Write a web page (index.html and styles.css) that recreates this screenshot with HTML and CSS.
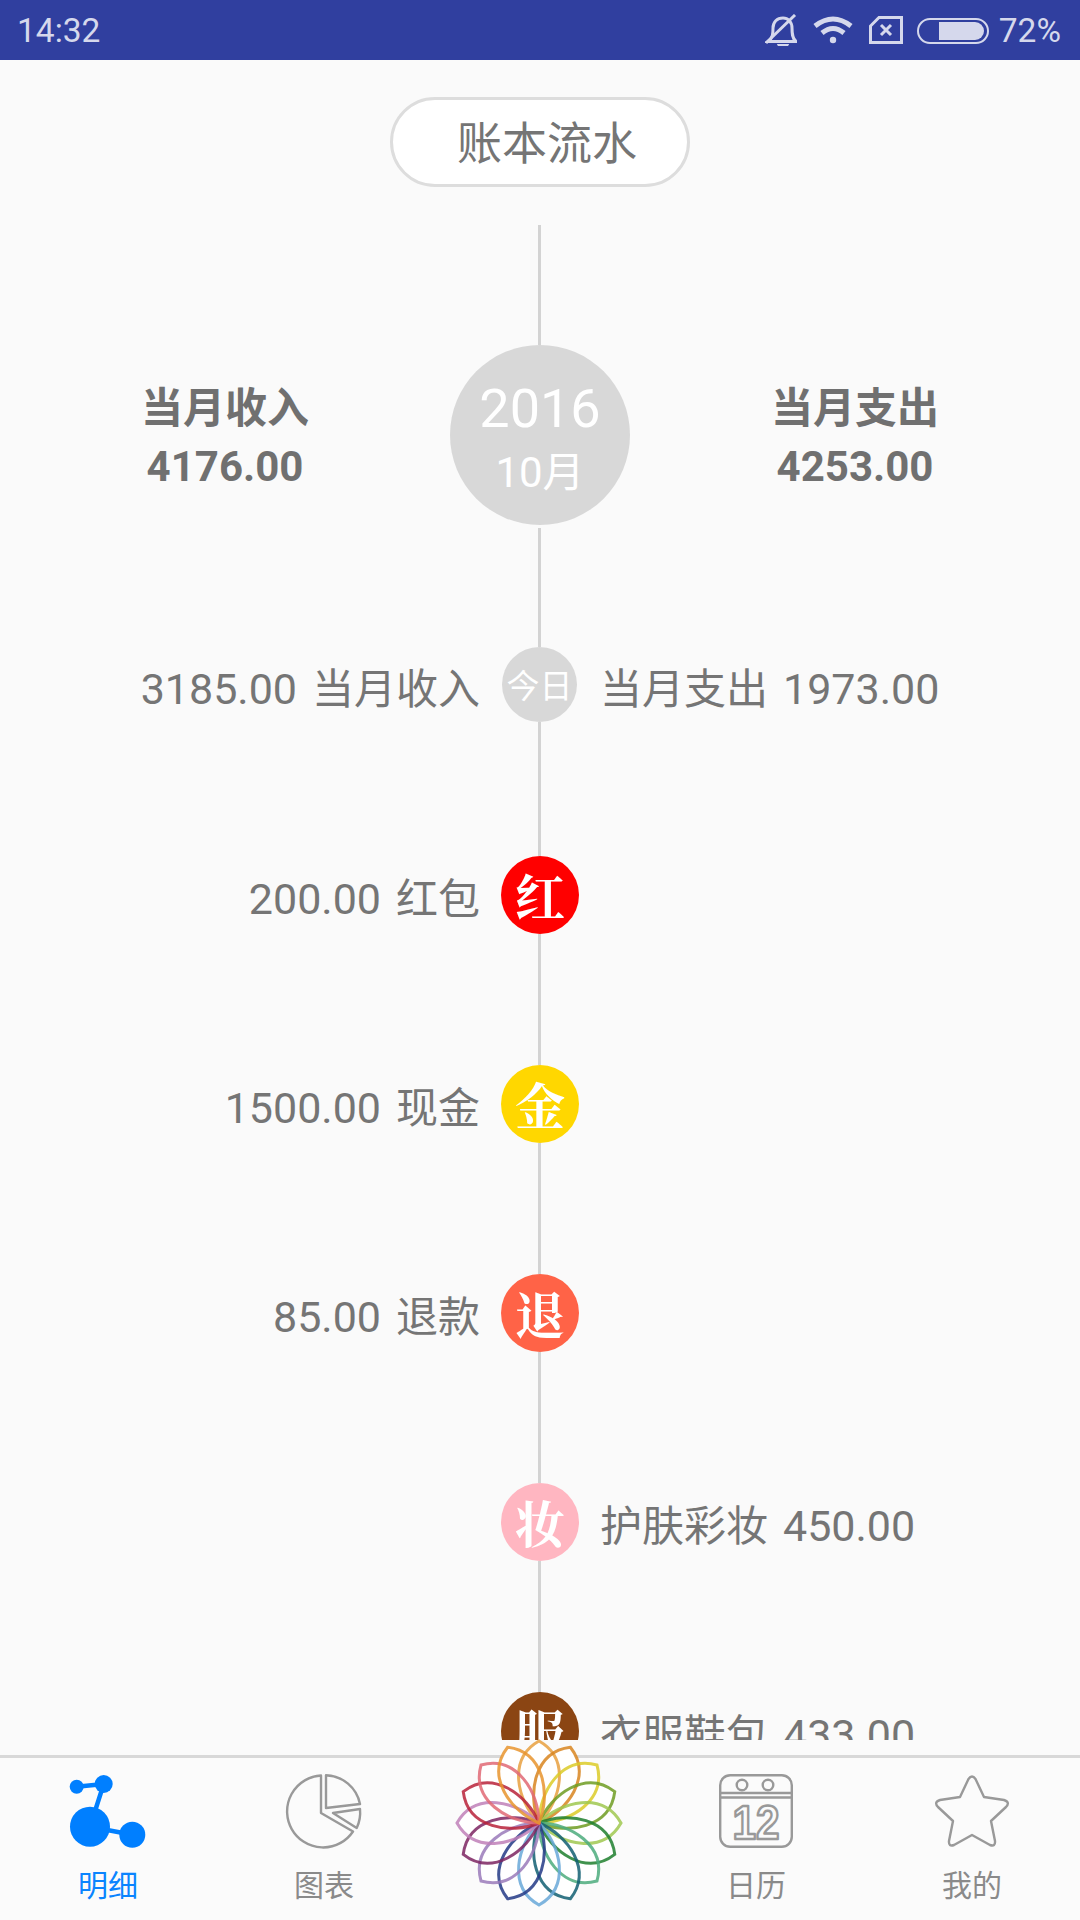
FILE: index.html
```html
<!DOCTYPE html>
<html lang="zh">
<head>
<meta charset="utf-8">
<title>账本流水</title>
<link rel="stylesheet" href="styles.css">
</head>
<body>
<div class="phone">
  <header class="status">
    <span class="clock">14:32</span>
    <div class="status-right">
      <svg class="ic-bell" viewBox="0 0 32 32"><path class="s-line" d="M3 27.500H31C27 24 27 19 27 14C27 8 23 4 18 4C12 4 8 8 8 14C8 19 8 24 3 27.500Z"/><path class="s-fill" d="M12 30H24A6 3.500 0 0 1 12 30Z"/><path class="s-line" d="M1 29L30 1"/></svg>
      <svg class="ic-wifi" viewBox="0 0 40 28"><path class="s-wide" d="M2 10Q20 -4 38 10"/><path class="s-wide" d="M9 17Q20 8 31 17"/><circle class="s-fill" cx="20" cy="24" r="3.200"/></svg>
      <svg class="ic-sim" viewBox="0 0 34 28"><path class="s-line s-thick" d="M10 1.500H32.500V26.500H1.500V10Z"/><path class="s-line s-thick" d="M12 9L22 19M22 9L12 19"/></svg>
      <svg class="ic-batt" viewBox="0 0 72 26"><rect class="s-line s-thin" x="1" y="1" width="70" height="24" rx="12"/><path class="s-fill" d="M22 4H58A9 9 0 0 1 58 22H22Z"/></svg>
      <span class="pct">72%</span>
    </div>
  </header>

  <main class="ledger">
    <div class="pill">账本流水</div>
    <div class="stem stem-top"></div>
    <section class="row row-month">
      <div class="stat"><div class="stat-label">当月收入</div><div class="stat-value">4176.00</div></div>
      <div class="month-dot"><span class="year">2016</span><span class="month">10月</span></div>
      <div class="stat"><div class="stat-label">当月支出</div><div class="stat-value">4253.00</div></div>
    </section>
    <div class="stem stem-after-month"></div>
    <section class="row">
      <div class="side side-left"><span class="amt">3185.00</span><span>当月收入</span></div>
      <div class="dot dot-today">今日</div>
      <div class="side"><span>当月支出</span><span class="amt">1973.00</span></div>
    </section>
    <div class="stem stem-after-today"></div>
    <section class="row">
      <div class="side side-left"><span class="amt">200.00</span><span>红包</span></div>
      <div class="dot dot-cat dot-red">红</div>
      <div class="side"></div>
    </section>
    <div class="stem"></div>
    <section class="row">
      <div class="side side-left"><span class="amt">1500.00</span><span>现金</span></div>
      <div class="dot dot-cat dot-gold">金</div>
      <div class="side"></div>
    </section>
    <div class="stem"></div>
    <section class="row">
      <div class="side side-left"><span class="amt">85.00</span><span>退款</span></div>
      <div class="dot dot-cat dot-tomato">退</div>
      <div class="side"></div>
    </section>
    <div class="stem"></div>
    <section class="row">
      <div class="side side-left"></div>
      <div class="dot dot-cat dot-pink">妆</div>
      <div class="side"><span>护肤彩妆</span><span class="amt">450.00</span></div>
    </section>
    <div class="stem"></div>
    <section class="row">
      <div class="side side-left"></div>
      <div class="dot dot-cat dot-brown">服</div>
      <div class="side"><span>衣服鞋包</span><span class="amt">433.00</span></div>
    </section>
  </main>

  <nav class="tabbar">
    <div class="tab tab-active">
      <svg class="tab-icon" viewBox="0 0 74 74"><path class="net-line" d="M5.700 12.700L32.700 10M32.700 10L19 52.700L61.300 60.700"/><circle class="net-node" cx="5.700" cy="12.700" r="7"/><circle class="net-node" cx="32.700" cy="10" r="9"/><circle class="net-node" cx="19" cy="52.700" r="20"/><circle class="net-node" cx="61.300" cy="60.700" r="13"/></svg>
      <span class="tab-label">明细</span>
    </div>
    <div class="tab">
      <svg class="tab-icon" viewBox="0 0 74 74"><path class="outline" d="M34 1.500A36 36 0 1 0 66 57.500L34 39Z"/><path class="outline" d="M39 1.200A36 36 0 0 1 73 30L39 34Z"/><path class="outline" d="M46 39L73 35A36 36 0 0 1 69.700 54Z"/></svg>
      <span class="tab-label">图表</span>
    </div>
    <div class="tab"></div>
    <div class="tab">
      <svg class="tab-icon" viewBox="0 0 74 74"><rect class="outline" x="1.200" y="1.200" width="71.600" height="71.600" rx="10"/><path class="outline" d="M1 19H73M1 23.500H73"/><circle class="outline" cx="23" cy="11" r="5.300"/><circle class="outline" cx="49" cy="11" r="5.300"/><text class="cal-num" x="37" y="65" text-anchor="middle" textLength="47" lengthAdjust="spacingAndGlyphs">12</text></svg>
      <span class="tab-label">日历</span>
    </div>
    <div class="tab">
      <svg class="tab-icon" viewBox="0 0 74 74"><path class="outline" d="M33.500 5Q37 0 40.500 5L49 23L69 26Q75.500 28 71 33L56 47L60 67Q60.500 73 55 71L37 61L19 71Q13.500 73 14 67L18 47L3 33Q-1.500 28 5 26L25 23Z"/></svg>
      <span class="tab-label">我的</span>
    </div>
    <svg class="flower" viewBox="-85 -85 170 170">
      <defs><path id="petal" d="M0 0C-22 -22 -32 -64 0 -82C32 -64 22 -22 0 0Z"/></defs>
      <g class="flower-base">
        <use href="#petal"/><use href="#petal" transform="rotate(22.500)"/><use href="#petal" transform="rotate(45)"/><use href="#petal" transform="rotate(67.500)"/><use href="#petal" transform="rotate(90)"/><use href="#petal" transform="rotate(112.500)"/><use href="#petal" transform="rotate(135)"/><use href="#petal" transform="rotate(157.500)"/><use href="#petal" transform="rotate(180)"/><use href="#petal" transform="rotate(202.500)"/><use href="#petal" transform="rotate(225)"/><use href="#petal" transform="rotate(247.500)"/><use href="#petal" transform="rotate(270)"/><use href="#petal" transform="rotate(292.500)"/><use href="#petal" transform="rotate(315)"/><use href="#petal" transform="rotate(337.500)"/>
      </g>
      <g class="flower-lines">
        <use href="#petal" stroke="#e8a040"/><use href="#petal" transform="rotate(22.500)" stroke="#d88520"/><use href="#petal" transform="rotate(45)" stroke="#dccb28"/><use href="#petal" transform="rotate(67.500)" stroke="#6f9c22"/><use href="#petal" transform="rotate(90)" stroke="#a0c850"/><use href="#petal" transform="rotate(112.500)" stroke="#1f7f2e"/><use href="#petal" transform="rotate(135)" stroke="#4cab7c"/><use href="#petal" transform="rotate(157.500)" stroke="#125f72"/><use href="#petal" transform="rotate(180)" stroke="#68a8d8"/><use href="#petal" transform="rotate(202.500)" stroke="#233a86"/><use href="#petal" transform="rotate(225)" stroke="#9a7aba"/><use href="#petal" transform="rotate(247.500)" stroke="#7c2462"/><use href="#petal" transform="rotate(270)" stroke="#c080b8"/><use href="#petal" transform="rotate(292.500)" stroke="#b8223a"/><use href="#petal" transform="rotate(315)" stroke="#e06874"/><use href="#petal" transform="rotate(337.500)" stroke="#e8942e"/>
      </g>
    </svg>
  </nav>
</div>
</body>
</html>
```
FILE: styles.css
```css
* { box-sizing: border-box; }
html, body { margin: 0; padding: 0; }
body {
  background: #fafafa;
  font-family: Roboto, "Noto Sans CJK SC", sans-serif;
  color: #757575;
}
.phone {
  width: 1080px;
  height: 1920px;
  display: flex;
  flex-direction: column;
  overflow: hidden;
}

/* status bar */
.status {
  height: 60px;
  flex: none;
  background: #303f9f;
  color: #d5d8ec;
  display: flex;
  align-items: center;
  justify-content: space-between;
  padding: 1px 19px 0 17px;
  font-size: 33.500px;
}
.status-right { display: flex; align-items: center; }
.ic-bell { width: 32px; height: 32px; margin-top: -2px; }
.ic-wifi { width: 40px; height: 28px; margin-left: 16px; margin-top: -2px; }
.ic-sim { width: 34px; height: 28px; margin-left: 16px; margin-top: -2px; }
.ic-batt { width: 72px; height: 26px; margin-left: 14px; }
.pct { margin-left: 10px; }
.s-line { fill: none; stroke: #d5d8ec; stroke-width: 3; }
.s-thick { stroke-width: 3; }
.s-thin { stroke-width: 2; }
.s-wide { fill: none; stroke: #d5d8ec; stroke-width: 5; }
.s-fill { fill: #d5d8ec; }

/* main timeline */
.ledger {
  height: 1680px;
  flex: none;
  overflow: hidden;
  display: flex;
  flex-direction: column;
  align-items: center;
}
.pill {
  flex: none;
  width: 300px;
  height: 90px;
  margin-top: 37px;
  border: 3px solid #dddddd;
  border-radius: 45px;
  background: #fff;
  display: flex;
  align-items: center;
  justify-content: center;
  padding: 0 0 3px 14px;
  font-size: 45px;
}
.stem {
  flex: none;
  width: 3px;
  height: 131px;
  margin-right: 1px;
  background: #d3d3d3;
}
.stem-top { height: 120px; margin-top: 38px; }
.stem-after-month { height: 119px; margin-top: 3px; }
.stem-after-today { height: 134px; }

.row {
  flex: none;
  width: 100%;
  display: grid;
  grid-template-columns: 1fr 78px 1fr;
  column-gap: 21px;
  align-items: center;
  justify-items: center;
  font-size: 42px;
}
.row-month {
  grid-template-columns: 1fr 180px 1fr;
  column-gap: 0;
}
.side {
  width: 100%;
  padding-top: 1px;
  display: flex;
  align-items: baseline;
  gap: 15px;
  white-space: nowrap;
}
.side-left { justify-content: flex-end; }
.amt { font-size: 43px; }

.stat { text-align: center; font-weight: 700; color: #707070; line-height: 58px; padding-top: 5px; }
.month-dot {
  width: 180px;
  height: 180px;
  border-radius: 50%;
  background: #d8d8d8;
  color: #fff;
  display: flex;
  flex-direction: column;
  align-items: center;
  padding-top: 30px;
}
.year { font-size: 54px; line-height: 68px; }
.month { font-size: 42px; line-height: 60px; }

.dot {
  border-radius: 50%;
  color: #fff;
  display: flex;
  align-items: center;
  justify-content: center;
}
.dot-today { width: 75px; height: 75px; margin-right: 1px; padding-bottom: 2px; background: #d8d8d8; font-size: 33px; }
.dot-cat {
  width: 78px;
  height: 78px;
  padding-bottom: 3px;
  font-family: "Noto Serif CJK SC", "Liberation Serif", "Noto Sans CJK SC", serif;
  font-weight: 700;
  font-size: 50px;
}
.dot-red { background: #ff0000; }
.dot-gold { background: #ffd700; }
.dot-tomato { background: #ff6347; }
.dot-pink { background: #ffb6c1; }
.dot-brown { background: #8b4513; }

/* tab bar */
.tabbar {
  position: relative;
  flex: none;
  height: 165px;
  margin-top: 15px;
  border-top: 3px solid #d8d8d8;
  background: #fbfbfb;
  display: grid;
  grid-template-columns: repeat(5, 1fr);
}
.tab {
  display: flex;
  flex-direction: column;
  align-items: center;
  padding-top: 16px;
  color: #8a8a8a;
}
.tab-active { color: #0a84ff; }
.tab-icon { width: 74px; height: 74px; overflow: visible; }
.tab-label { font-size: 30px; line-height: 36px; margin-top: 20px; }
.outline { fill: none; stroke: #999999; stroke-width: 2.400; stroke-linejoin: round; }
.net-line { fill: none; stroke: #007fff; stroke-width: 4.500; }
.net-node { fill: #007fff; }
.cal-num {
  font-family: "Liberation Sans", sans-serif;
  font-weight: 700;
  font-size: 48px;
  fill: none;
  stroke: #999999;
  stroke-width: 2.600;
  stroke-linejoin: round;
}
.flower {
  position: absolute;
  width: 170px;
  height: 170px;
  left: 454px;
  top: -20px;
}
.flower-base { fill: #ffffff; }
.flower-lines { fill: none; stroke-width: 3; stroke-opacity: 0.85; }
```
